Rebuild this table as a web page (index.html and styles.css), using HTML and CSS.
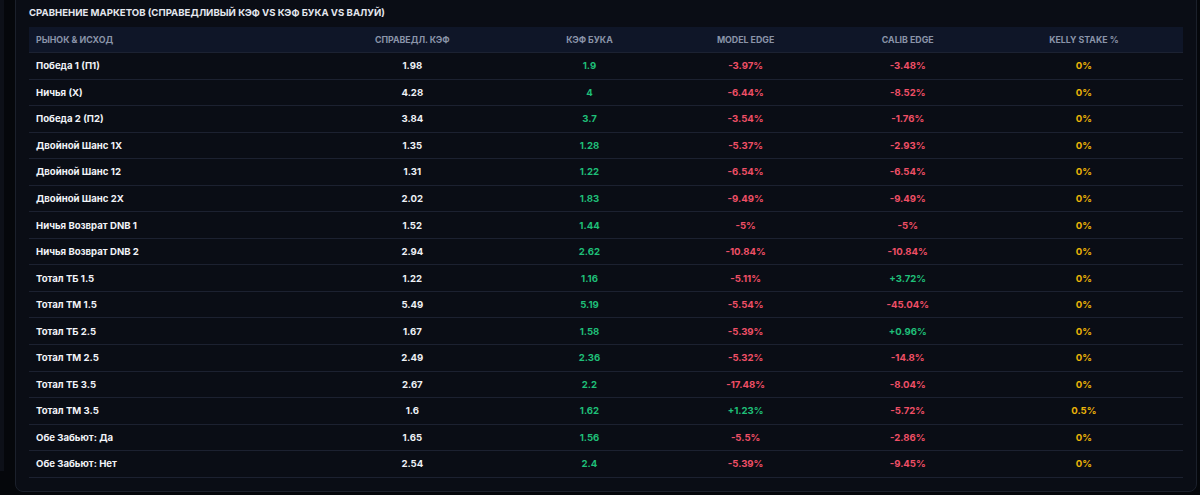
FILE: index.html
```html
<!DOCTYPE html>
<html lang="ru">
<head>
<meta charset="utf-8">
<title>Сравнение маркетов</title>
<link rel="stylesheet" href="styles.css">
</head>
<body>
<div class="page">
  <section class="card">
    <h2 class="card-title">Сравнение маркетов (Справедливый кэф vs Кэф бука vs Валуй)</h2>
    <table class="markets">
      <colgroup>
        <col class="c-market"><col class="c-fair"><col class="c-book"><col class="c-model"><col class="c-calib"><col class="c-kelly">
      </colgroup>
      <thead>
        <tr><th class="left">Рынок &amp; Исход</th><th>Справедл. кэф</th><th>Кэф бука</th><th>Model Edge</th><th>Calib Edge</th><th>Kelly Stake %</th></tr>
      </thead>
      <tbody>
        <tr><td class="left">Победа 1 (П1)</td><td>1.98</td><td class="pos">1.9</td><td class="neg">-3.97%</td><td class="neg">-3.48%</td><td class="kelly">0%</td></tr>
        <tr><td class="left">Ничья (X)</td><td>4.28</td><td class="pos">4</td><td class="neg">-6.44%</td><td class="neg">-8.52%</td><td class="kelly">0%</td></tr>
        <tr><td class="left">Победа 2 (П2)</td><td>3.84</td><td class="pos">3.7</td><td class="neg">-3.54%</td><td class="neg">-1.76%</td><td class="kelly">0%</td></tr>
        <tr><td class="left">Двойной Шанс 1X</td><td>1.35</td><td class="pos">1.28</td><td class="neg">-5.37%</td><td class="neg">-2.93%</td><td class="kelly">0%</td></tr>
        <tr><td class="left">Двойной Шанс 12</td><td>1.31</td><td class="pos">1.22</td><td class="neg">-6.54%</td><td class="neg">-6.54%</td><td class="kelly">0%</td></tr>
        <tr><td class="left">Двойной Шанс 2X</td><td>2.02</td><td class="pos">1.83</td><td class="neg">-9.49%</td><td class="neg">-9.49%</td><td class="kelly">0%</td></tr>
        <tr><td class="left">Ничья Возврат DNB 1</td><td>1.52</td><td class="pos">1.44</td><td class="neg">-5%</td><td class="neg">-5%</td><td class="kelly">0%</td></tr>
        <tr><td class="left">Ничья Возврат DNB 2</td><td>2.94</td><td class="pos">2.62</td><td class="neg">-10.84%</td><td class="neg">-10.84%</td><td class="kelly">0%</td></tr>
        <tr><td class="left">Тотал ТБ 1.5</td><td>1.22</td><td class="pos">1.16</td><td class="neg">-5.11%</td><td class="pos">+3.72%</td><td class="kelly">0%</td></tr>
        <tr><td class="left">Тотал ТМ 1.5</td><td>5.49</td><td class="pos">5.19</td><td class="neg">-5.54%</td><td class="neg">-45.04%</td><td class="kelly">0%</td></tr>
        <tr><td class="left">Тотал ТБ 2.5</td><td>1.67</td><td class="pos">1.58</td><td class="neg">-5.39%</td><td class="pos">+0.96%</td><td class="kelly">0%</td></tr>
        <tr><td class="left">Тотал ТМ 2.5</td><td>2.49</td><td class="pos">2.36</td><td class="neg">-5.32%</td><td class="neg">-14.8%</td><td class="kelly">0%</td></tr>
        <tr><td class="left">Тотал ТБ 3.5</td><td>2.67</td><td class="pos">2.2</td><td class="neg">-17.48%</td><td class="neg">-8.04%</td><td class="kelly">0%</td></tr>
        <tr><td class="left">Тотал ТМ 3.5</td><td>1.6</td><td class="pos">1.62</td><td class="pos">+1.23%</td><td class="neg">-5.72%</td><td class="kelly">0.5%</td></tr>
        <tr><td class="left">Обе Забьют: Да</td><td>1.65</td><td class="pos">1.56</td><td class="neg">-5.5%</td><td class="neg">-2.86%</td><td class="kelly">0%</td></tr>
        <tr><td class="left">Обе Забьют: Нет</td><td>2.54</td><td class="pos">2.4</td><td class="neg">-5.39%</td><td class="neg">-9.45%</td><td class="kelly">0%</td></tr>
      </tbody>
    </table>
  </section>
</div>
</body>
</html>
```
FILE: styles.css
```css
html, body {
  margin: 0;
  padding: 0;
  background: #05070b;
  height: 100%;
}
body {
  font-family: Inter, "Noto Sans", "Liberation Sans", sans-serif;
  color: #eef1f6;
  overflow: hidden;
}
.page {
  border-left: 4px solid #0d1018;
  padding: 0 3px 0 11px;
  height: 100%;
  box-sizing: border-box;
}
.card {
  margin-top: -24px;
  background: #0a0d15;
  border: 1px solid #1b202b;
  border-radius: 8px;
  padding: 29px 13px 13px 13px;
}
.card-title {
  margin: 0 0 7px 0;
  font-size: 9.6px;
  line-height: 14px;
  font-weight: 700;
  text-transform: uppercase;
  color: #e4e7ee;
  letter-spacing: 0;
}
.markets {
  width: 100%;
  border-collapse: collapse;
  table-layout: fixed;
  font-size: 9.6px;
  font-weight: 700;
}
.c-market { width: 277px; }
.c-fair { width: 212px; }
.c-book { width: 142px; }
.c-model { width: 170px; }
.c-calib { width: 154px; }
.c-kelly { width: 198px; }
.markets th {
  background: #0f1628;
  color: #8a94a8;
  font-size: 8.8px;
  text-transform: uppercase;
  font-weight: 700;
  height: 25px;
  padding: 0 7px;
  text-align: center;
  border-bottom: 1px solid #1c2232;
}
.markets td {
  padding: 0 7px;
  height: 25.56px;
  text-align: center;
  border-bottom: 1px solid #1c2130;
  color: #eef1f6;
}
.markets .left { text-align: left; }
.markets td.left { color: #f1f3f8; }
.markets td.pos { color: #1fbf78; }
.markets td.neg { color: #ef4f66; }
.markets td.kelly { color: #eab308; }
```
